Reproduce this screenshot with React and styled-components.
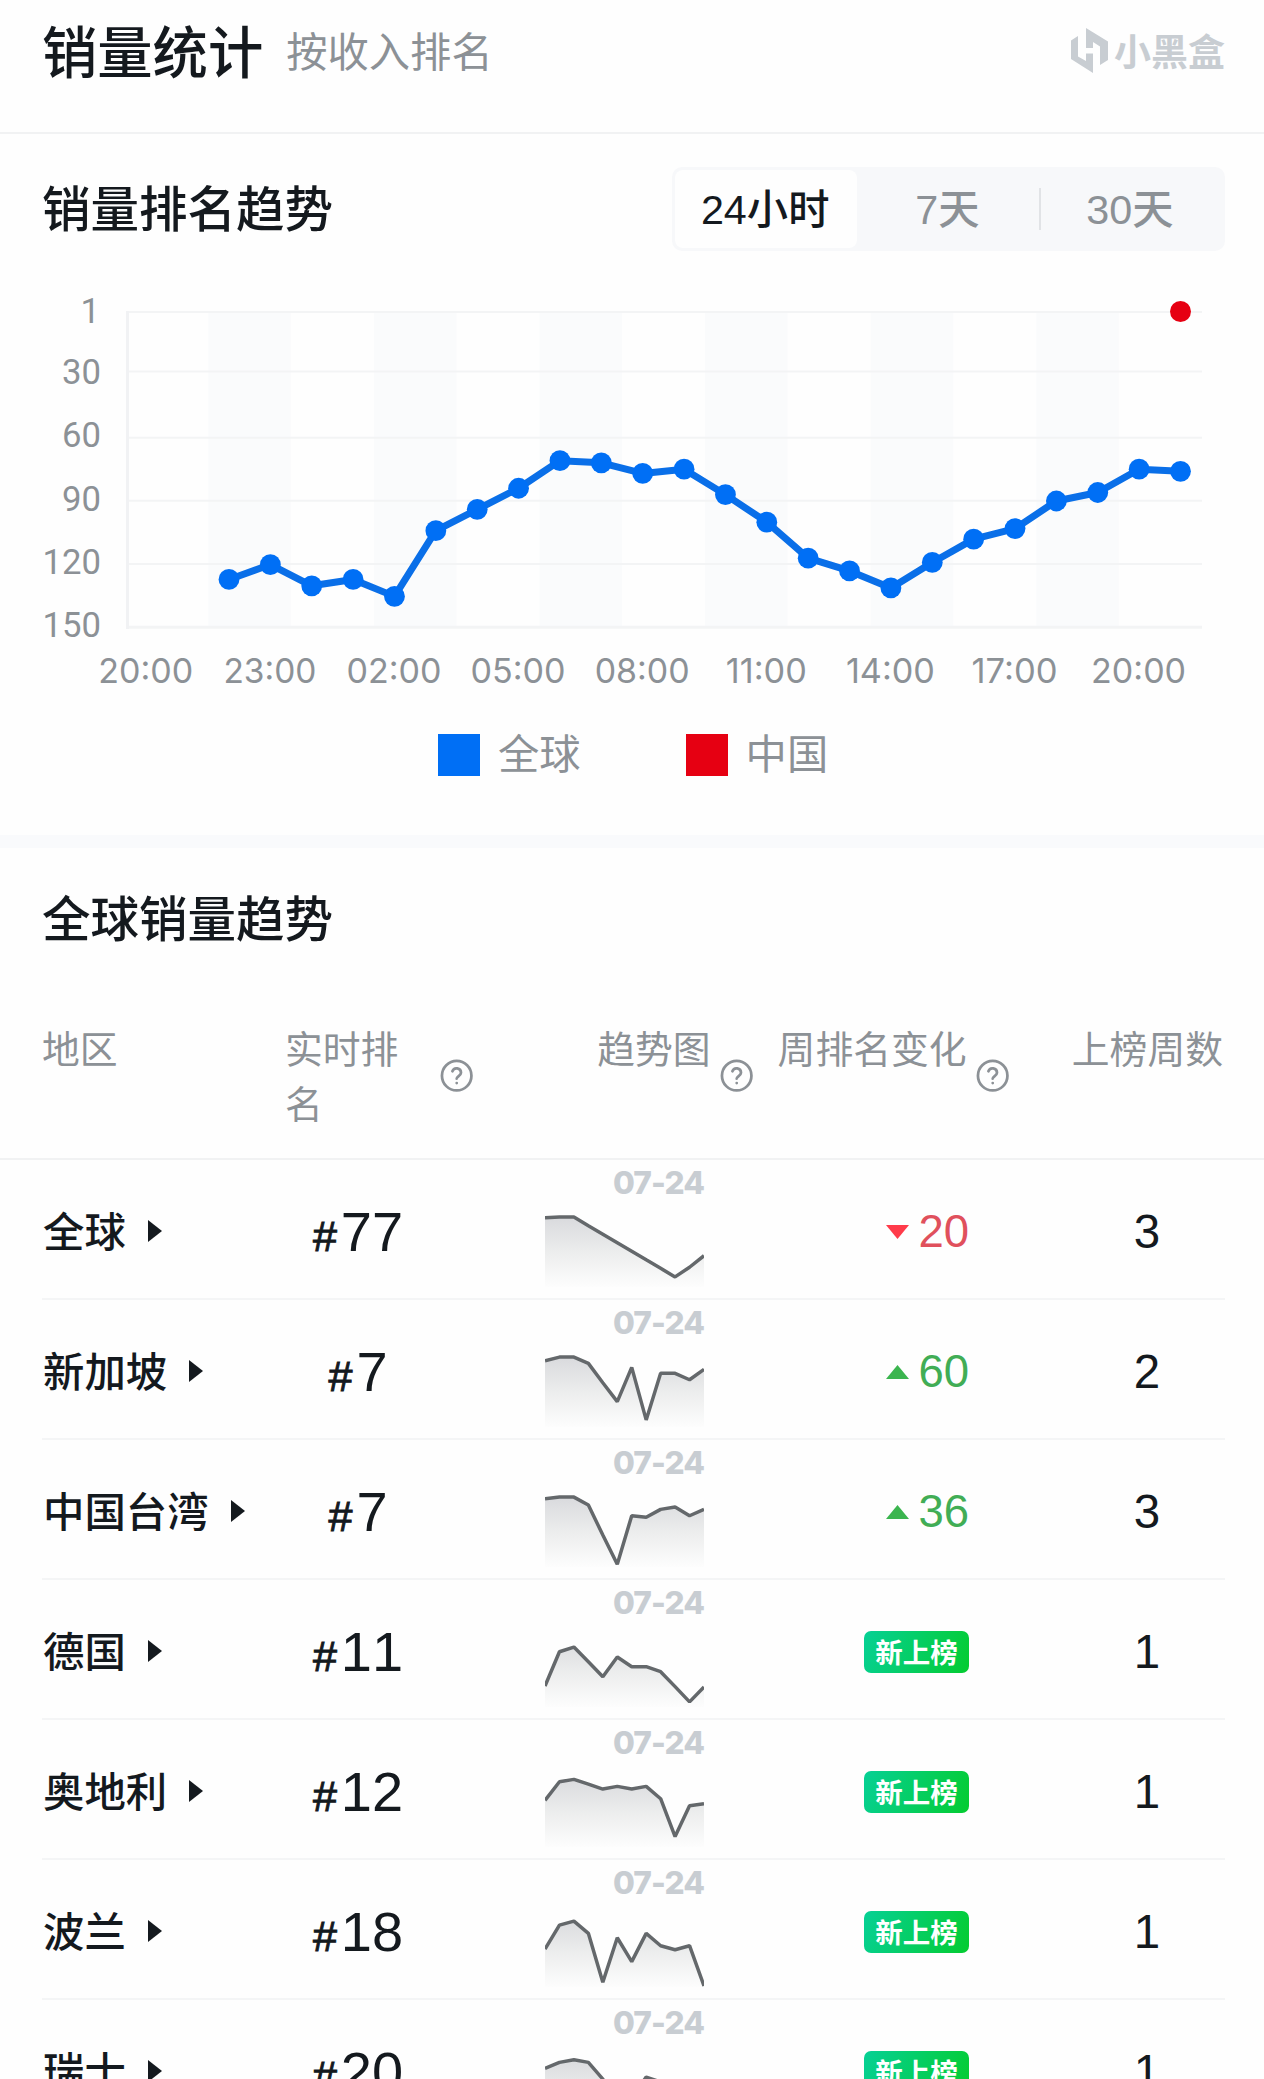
import React, { useState } from 'react'
import styled, { createGlobalStyle } from 'styled-components'

const GlobalStyle = createGlobalStyle`
*{
  box-sizing: border-box;
}
body{
  margin: 0;
  background: #fefefe;
  color: #14191e;
  font-family: "Noto Sans CJK SC", "Noto Sans", sans-serif;
}
`

const Page = styled.main`
width: 1264px;
height: 2079px;
overflow: hidden;
background: #fefefe;
`
const Header = styled.header`
height: 134px;
padding: 0 39px 35px 42px;
border-bottom: 2px solid #f1f2f3;
display: flex;
align-items: center;
`
const Title = styled.h1`
margin: 0;
font-size: 55.3px;
font-weight: 500;
line-height: 80px;
`
const SubTitle = styled.span`
margin-left: 23px;
font-size: 41.3px;
line-height: 60px;
color: #8c9196;
`
const Brand = styled.div`
margin-left: auto;
padding-top: 4px;
display: flex;
align-items: center;
gap: 6px;
color: #c8cdd2;

span{
  font-size: 37px;
  font-weight: 700;
  line-height: 45px;
}
`
const SectionTitle = styled.h2`
margin: 0;
font-size: 48.5px;
font-weight: 500;
line-height: 78px;
`
const TrendHead = styled.div`
margin-top: 33px;
padding: 0 39px 0 42px;
height: 84px;
display: flex;
justify-content: space-between;
align-items: flex-start;
`
const Tabs = styled.div`
width: 553px;
height: 84px;
padding: 3px;
border-radius: 10px;
background: #f7f8fa;
display: flex;
`
const Tab = styled.button`
flex: 1;
border: 0;
padding: 2px 2px 0 0;
border-radius: 8px;
background: ${props => props.$active ? '#fefefe' : 'transparent'};
color: ${props => props.$active ? '#14191e' : '#8c9196'};
font-family: "Liberation Sans", "Noto Sans CJK SC", sans-serif;
font-size: 41.3px;
font-weight: 400;
line-height: 60px;
cursor: pointer;

b{
  font-weight: 500;
}
`
const TabLine = styled.i`
width: 2px;
height: 42px;
margin: 18px -1px;
background: #e1e3e6;
`
const Chart = styled.svg`
display: block;
`
const Legend = styled.div`
margin: 34px 0 59px;
padding-left: 438px;
height: 42px;
display: flex;
gap: 105px;
`
const LegendItem = styled.div`
display: flex;
align-items: center;
gap: 18px;
font-size: 41.3px;
line-height: 34px;
color: #8c9196;

&::before{
  content: '';
  width: 42px;
  height: 42px;
  background: ${props => props.$color};
}
span{
  margin-top: -8px;
}
`
const Gap = styled.div`
height: 13px;
background: #f9fafc;
`
const TableTitle = styled.div`
padding: 29px 42px 0;
height: 171px;
`
const HeadRow = styled.div`
height: 141px;
padding-left: 42px;
border-bottom: 2px solid #f1f2f3;
display: grid;
grid-template-columns: 243px 190px 279px 256px 213px;
align-items: start;
`
const HeadCell = styled.div`
height: 112px;
display: flex;
justify-content: ${props => props.$align || 'flex-start'};
font-size: 37.8px;
line-height: 55px;
color: #8c9196;
white-space: nowrap;

svg{
  flex: none;
  align-self: center;
  margin-top: 2px;
  margin-left: ${props => props.$gap || 8}px;
}
`
const Wrapped = styled.span`
width: 130px;
white-space: normal;
`
const Row = styled.div`
height: 140px;
margin: 0 39px 0 42px;
border-bottom: 2px solid #f4f5f6;
display: grid;
grid-template-columns: 245px 142px 280px 260px 256px;
`
const Region = styled.div`
padding: 0 0 6px 1px;
display: flex;
align-items: center;
gap: 22px;
font-size: 41.4px;
line-height: 60px;
font-weight: 500;
white-space: nowrap;

svg{
  margin-top: 4px;
}
`
const Numeric = styled.div`
display: flex;
align-items: center;
justify-content: center;
font-family: "Liberation Sans", sans-serif;
font-kerning: none;
`
const Rank = styled(Numeric)`
padding-top: 5px;
font-size: 56px;
align-items: baseline;
line-height: 134px;

small{
  margin-right: 4px;
  font-size: 43px;
  -webkit-text-stroke: 1px #14191e;
}
`
const Trend = styled.div`
padding: 6px 0 0 116px;
width: 275px;
text-align: right;
font-family: Inter, sans-serif;
font-size: 31.6px;
font-weight: 800;
line-height: 34px;
letter-spacing: -0.9px;
color: #c8cdd2;

svg{
  display: block;
}
`
const Change = styled(Numeric)`
justify-content: flex-end;
gap: 9px;
font-size: 45.5px;
color: ${props => props.$down ? '#e0505c' : '#41ad55'};
`
const Badge = styled.span`
width: 105px;
height: 42px;
border-radius: 7px;
background: linear-gradient(110deg, #06d095, #04cc30);
color: #fff;
font-family: "Noto Sans CJK SC", sans-serif;
font-size: 27.5px;
font-weight: 700;
line-height: 40px;
text-align: center;
`
const Weeks = styled(Numeric)`
padding-left: 100px;
font-size: 47.5px;
`

const worldRanks = [127, 120, 130, 127, 135, 104, 94, 84, 71, 72, 77, 75, 87, 100, 117, 123, 131, 119, 108, 103, 90, 86, 75, 76]

const yAxis = [
  { label: '1', line: 312, text: 322.7 },
  { label: '30', line: 371.5, text: 384 },
  { label: '60', line: 437.7, text: 447 },
  { label: '90', line: 500.8, text: 510.7 },
  { label: '120', line: 564, text: 573.7 },
  { label: '150', line: 627.3, text: 636.7 },
]

const hours = [
  ['20:00', 95], ['23:00', 93], ['02:00', 95], ['05:00', 95], ['08:00', 95],
  ['11:00', 81], ['14:00', 89], ['17:00', 86], ['20:00', 95],
]

const rows = [
  { name: '全球', rank: 77, change: -20, weeks: 3, data: [57.7, 57, 57, 65.6, 74.1, 82.7, 91.3, 99.9, 108.4, 117, 107.3, 95.7] },
  { name: '新加坡', rank: 7, change: 60, weeks: 2, data: [60.7, 57, 57, 63.3, 82.7, 101.7, 67.3, 120, 73.3, 73.3, 79.7, 69.3] },
  { name: '中国台湾', rank: 7, change: 36, weeks: 3, data: [58.7, 57, 57, 65, 95, 124.3, 75.7, 77.3, 69.3, 67, 75.7, 69.3] },
  { name: '德国', rank: 11, weeks: 1, data: [106, 71.7, 67, 81.7, 96.7, 77, 86.7, 86.7, 91.7, 106.7, 122, 107] },
  { name: '奥地利', rank: 12, weeks: 1, data: [80.3, 61.7, 59.3, 64, 69, 66.3, 69, 66.3, 78.7, 116.7, 85.7, 83.7] },
  { name: '波兰', rank: 18, weeks: 1, data: [89, 65, 61, 73.3, 122.3, 77.7, 101.7, 73.3, 85.7, 89.7, 85.7, 126] },
  { name: '瑞士', rank: 20, weeks: 1, data: [68.3, 62.3, 59.7, 62.3, 79, 110, 98, 77, 82, 90, 84, 100] },
]

const HelpIcon = () => (
  <svg width="35.4" height="35.4" viewBox="0 0 24 24" fill="none" stroke="#8c9196" strokeWidth="1.85" strokeLinecap="round" strokeLinejoin="round">
    <circle cx="12" cy="12" r="10"/>
    <path d="M9.09 9a3 3 0 0 1 5.83 1c0 2-3 2.4-2.92 4"/>
    <path d="M12 17h.01"/>
  </svg>
)

const Logo = () => (
  <svg width="37" height="45" viewBox="0 0 37 45" fill="currentColor">
    <path d="M0 12.5L7 8v20.5l8 4.5v-7.5h7V45L0 31z"/>
    <path d="M15 0l22 13.5V32l-8 5V18.5L22 14v6h-7z"/>
  </svg>
)

const RankChart = () => {
  const points = worldRanks.map((rank, i) => [229 + i * 41.37, 312.3 + (rank - 1) * 2.12])
  return (
    <Chart width="1264" height="449" viewBox="0 251 1264 449">
      {[0, 1, 2, 3, 4, 5].map(i => (
        <rect key={i} x={208.3 + i * 165.6} y="312" width="82.5" height="315" fill="#fafbfc"/>
      ))}
      {yAxis.map(({ label, line, text }) => (
        <g key={label}>
          <path d={`M127 ${line}H1202`} stroke="#f3f4f5" strokeWidth={label === '150' ? 3 : 2}/>
          <text x={label === '1' ? 100 : 101} y={text} textAnchor="end" fontFamily="Roboto, sans-serif" fontSize="34.7" fill="#8c9196">{label}</text>
        </g>
      ))}
      <path d="M127.5 311V629" stroke="#f1f2f4" strokeWidth="3"/>
      <polyline points={points.join(' ')} fill="none" stroke="#0a6fe8" strokeWidth="7" strokeLinejoin="round"/>
      {points.map(([x, y]) => <circle key={x} cx={x} cy={y} r="10.4" fill="#006ff5"/>)}
      <circle cx="1180.5" cy="311.5" r="10.5" fill="#e60012"/>
      {hours.map(([label, width], i) => (
        <text key={i} x={145.8 + i * 124.1} y="683.3" textAnchor="middle" textLength={width} lengthAdjust="spacingAndGlyphs" fontFamily="Inter, sans-serif" fontSize="34" fill="#8c9196">{label}</text>
      ))}
    </Chart>
  )
}

const Sparkline = ({ id, data }) => {
  const line = data.map((y, i) => `${i * 14.5},${y}`).join(' ')
  return (
    <svg width="159" height="98" viewBox="0 40 159.5 98">
      <defs>
        <linearGradient id={id} gradientUnits="userSpaceOnUse" x1="0" y1="57" x2="0" y2="127">
          <stop offset="0" stopColor="#d9dadd"/>
          <stop offset="0.5" stopColor="#eceded"/>
          <stop offset="1" stopColor="#fdfdfd"/>
        </linearGradient>
      </defs>
      <polygon points={`0,127 ${line} 159.5,127`} fill={`url(#${id})`}/>
      <polyline points={line} fill="none" stroke="#64686b" strokeWidth="3.5" strokeLinejoin="bevel"/>
    </svg>
  )
}

const App = () => {
  const [range, setRange] = useState('24')

  return (
    <Page>
      <GlobalStyle/>
      <Header>
        <Title>销量统计</Title>
        <SubTitle>按收入排名</SubTitle>
        <Brand>
          <Logo/>
          <span>小黑盒</span>
        </Brand>
      </Header>

      <TrendHead>
        <SectionTitle>销量排名趋势</SectionTitle>
        <Tabs>
          <Tab $active={range === '24'} onClick={() => setRange('24')}>24<b>小时</b></Tab>
          <Tab $active={range === '7'} onClick={() => setRange('7')}>7<b>天</b></Tab>
          <TabLine/>
          <Tab $active={range === '30'} onClick={() => setRange('30')}>30<b>天</b></Tab>
        </Tabs>
      </TrendHead>
      <RankChart/>
      <Legend>
        <LegendItem $color="#006ff5"><span>全球</span></LegendItem>
        <LegendItem $color="#e60012"><span>中国</span></LegendItem>
      </Legend>

      <Gap/>
      <TableTitle>
        <SectionTitle>全球销量趋势</SectionTitle>
      </TableTitle>
      <HeadRow>
        <HeadCell>地区</HeadCell>
        <HeadCell $gap={24}><Wrapped>实时排名</Wrapped><HelpIcon/></HeadCell>
        <HeadCell $align="flex-end">趋势图<HelpIcon/></HeadCell>
        <HeadCell $align="flex-end">周排名变化<HelpIcon/></HeadCell>
        <HeadCell $align="flex-end">上榜周数</HeadCell>
      </HeadRow>
      {rows.map(({ name, rank, change, weeks, data }, i) => (
        <Row key={name}>
          <Region>
            {name}
            <svg width="14" height="22" viewBox="0 0 14 22" fill="#14191e"><path d="M0 0l14 11L0 22z"/></svg>
          </Region>
          <Rank><small>#</small>{rank}</Rank>
          <Trend>
            07-24
            <Sparkline id={`fill${i}`} data={data}/>
          </Trend>
          <Change $down={change < 0}>
            {change ? (
              <>
                <svg width="23" height="14" viewBox="0 0 23 14" fill={change < 0 ? '#ff3b4a' : '#3bb54f'}>
                  <path d={change < 0 ? 'M0 0h23L11.5 14z' : 'M0 14h23L11.5 0z'}/>
                </svg>
                {Math.abs(change)}
              </>
            ) : <Badge>新上榜</Badge>}
          </Change>
          <Weeks>{weeks}</Weeks>
        </Row>
      ))}
    </Page>
  )
}

export default App
